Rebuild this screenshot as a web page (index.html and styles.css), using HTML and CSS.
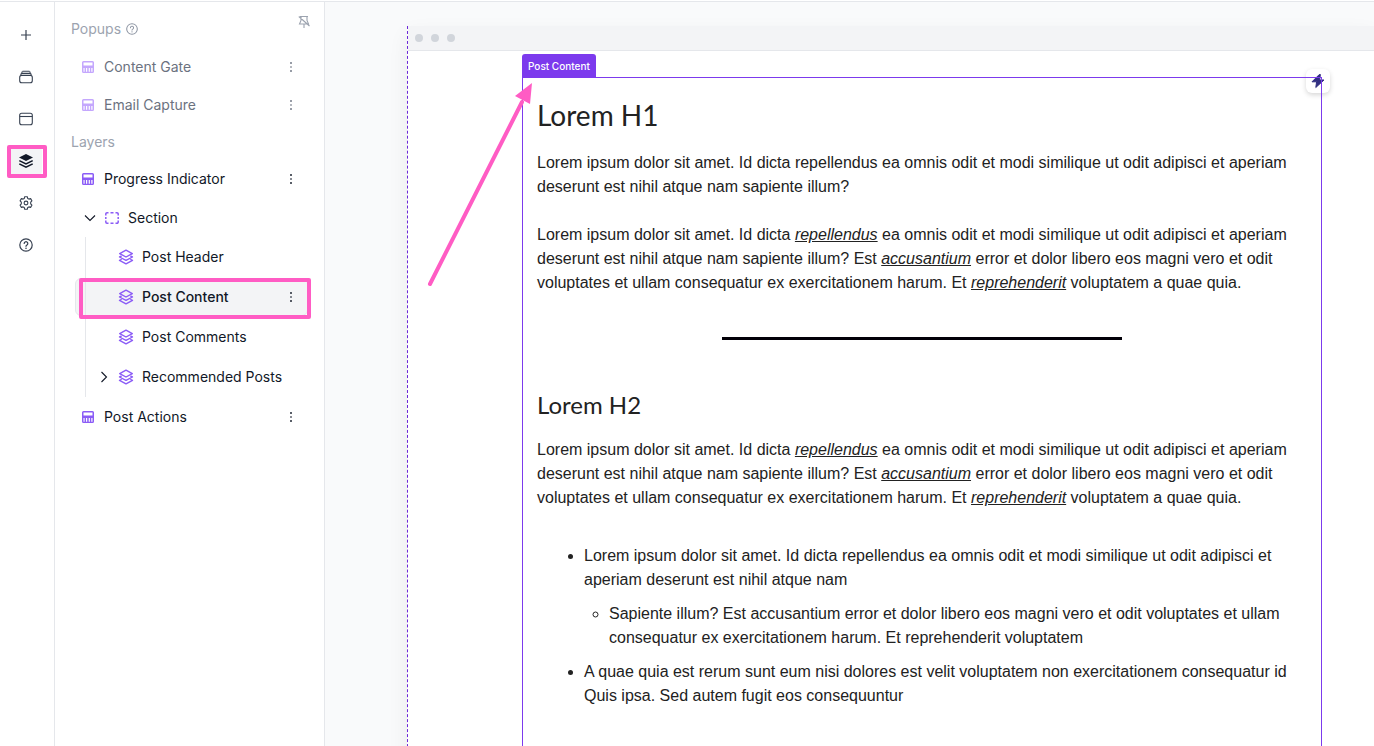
FILE: index.html
```html
<!DOCTYPE html>
<html lang="en">
<head>
  <meta charset="UTF-8" />
  <meta name="viewport" content="width=device-width, initial-scale=1.0" />
  <title>Layers - Post Editor</title>
  <link rel="stylesheet" href="styles.css">
</head>
<body>
  <!-- shared icons -->
  <svg class="sprite" aria-hidden="true">
    <symbol id="i-page" viewBox="0 0 14 14">
      <path fill="currentColor" fill-rule="evenodd" d="M2.500 1h9A1.500 1.500 0 0 1 13 2.500v9a1.500 1.500 0 0 1-1.500 1.500h-9A1.500 1.500 0 0 1 1 11.500v-9A1.500 1.500 0 0 1 2.500 1zM2.500 2.500v3h9v-3zM2.500 8v3.800h1.100V8zM5 8v3.800h1.200V8zM7.700 8v3.800h1.200V8zM10.300 8v3.800h1.200V8z"/>
    </symbol>
    <symbol id="i-layers" viewBox="0 0 16 16">
      <g fill="none" stroke="currentColor" stroke-width="1.400" stroke-linejoin="round" stroke-linecap="round">
        <path d="M8 1.200l6.300 3.400L8 8 1.700 4.600z"/>
        <path d="M3.200 7.200l-1.700.8L8 11.400 14.500 8l-1.700-.8"/>
        <path d="M3.200 10.500l-1.700.9L8 14.800l6.500-3.400-1.700-.9"/>
      </g>
    </symbol>
    <symbol id="i-dots" viewBox="0 0 4 12">
      <path fill="currentColor" d="M1 1h2v2H1zM1 9h2v2H1z" opacity=".7"/>
      <path fill="currentColor" d="M1 5h2v2H1z" opacity=".5"/>
    </symbol>
    <symbol id="i-help" viewBox="0 0 14 14">
      <circle cx="7" cy="7" r="6.200" fill="none" stroke="currentColor" stroke-width="1.200"/>
      <path d="M5.200 5.500a1.800 1.800 0 1 1 2.700 1.600c-.6.300-.9.600-.9 1.200" fill="none" stroke="currentColor" stroke-width="1.200" stroke-linecap="round"/>
      <circle cx="7" cy="10.300" r=".8" fill="currentColor"/>
    </symbol>
  </svg>

  <div class="app">
    <nav class="rail" aria-label="Tools">
      <button class="rail-btn" aria-label="Add">
        <svg width="14" height="14" viewBox="0 0 14 14"><path d="M7 2v10M2 7h10" stroke="currentColor" stroke-width="1.200"/></svg>
      </button>
      <button class="rail-btn" aria-label="Library">
        <svg width="14" height="14" viewBox="0 0 14 14" fill="none" stroke="currentColor" stroke-width="1.100"><path d="M3.500 1.300h7M1.900 5.500V4.600A1.200 1.200 0 0 1 3 3.400h8a1.200 1.200 0 0 1 1.100 1.200v.9M2.700 3.400c0-1.200.4-2.100 1.300-2.100M11.300 3.400c0-1.200-.4-2.100-1.300-2.100"/><rect x=".7" y="5.400" width="12.600" height="7.400" rx="2"/></svg>
      </button>
      <button class="rail-btn" aria-label="Pages">
        <svg width="14" height="14" viewBox="0 0 14 14" fill="none" stroke="currentColor" stroke-width="1.100"><rect x=".7" y="1.300" width="12.600" height="11.400" rx="2"/><path d="M.7 4.500h12.600"/></svg>
      </button>
      <button class="rail-btn active" aria-label="Layers">
        <svg width="16" height="16" viewBox="0 0 16 16"><path fill="currentColor" d="M8 1l7 3.500L8 8 1 4.500z"/><path d="M1.300 7.600L8 10.900l6.700-3.300M1.300 10.900L8 14.200l6.700-3.300" fill="none" stroke="currentColor" stroke-width="1.600"/></svg>
        <span class="marker"></span>
      </button>
      <button class="rail-btn" aria-label="Settings">
        <svg width="14" height="14" viewBox="0 0 14 14" fill="none" stroke="currentColor" stroke-width="1.100" stroke-linejoin="round"><path d="M5.700.7h2.600l.4 1.700 1.200.7 1.700-.5 1.300 2.200-1.200 1.300v1.800l1.200 1.300-1.300 2.200-1.700-.5-1.200.7-.4 1.700H5.700l-.4-1.700-1.200-.7-1.700.5L1.100 9.200l1.200-1.300V6.100L1.100 4.800l1.300-2.200 1.700.5 1.200-.7z"/><circle cx="7" cy="7" r="1.900"/></svg>
      </button>
      <button class="rail-btn" aria-label="Help">
        <svg width="14" height="14"><use href="#i-help"/></svg>
      </button>
    </nav>

    <aside class="panel">
      <div class="panel-title top">
        <span>Popups</span>
        <svg class="info" width="12" height="12"><use href="#i-help"/></svg>
        <button class="pin" aria-label="Unpin panel">
          <svg width="12" height="14" viewBox="0 0 12 14" fill="none" stroke="currentColor" stroke-width="1.100"><path d="M2 1.500h8M3 1.500v4L1.500 9h9L9 5.500v-4M6 9v4M.8 1.500l10.700 9.500"/></svg>
        </button>
      </div>
      <ul class="layers">
        <li class="row popup"><svg class="page" width="14" height="14"><use href="#i-page"/></svg><span>Content Gate</span><button class="more" aria-label="Content Gate options"><svg width="4" height="12"><use href="#i-dots"/></svg></button></li>
        <li class="row popup"><svg class="page" width="14" height="14"><use href="#i-page"/></svg><span>Email Capture</span><button class="more" aria-label="Email Capture options"><svg width="4" height="12"><use href="#i-dots"/></svg></button></li>
      </ul>

      <div class="panel-title">Layers</div>
      <ul class="layers">
        <li class="row"><svg class="page" width="14" height="14"><use href="#i-page"/></svg><span>Progress Indicator</span><button class="more" aria-label="Progress Indicator options"><svg width="4" height="12"><use href="#i-dots"/></svg></button></li>
        <li>
          <div class="row section">
            <button class="toggle" aria-label="Collapse Section"><svg width="12" height="8" viewBox="0 0 12 8"><path d="M1 1.500l5 5 5-5" fill="none" stroke="currentColor" stroke-width="1.100"/></svg></button>
            <svg width="14" height="12" viewBox="0 0 14 12" fill="none" stroke="currentColor" stroke-width="1.500"><path d="M.8 3.500V2A1.200 1.200 0 0 1 2 .8h1.500M5.500.8h3M10.500.8H12A1.200 1.200 0 0 1 13.200 2v1.500M13.200 5v2M13.200 8.500V10a1.200 1.200 0 0 1-1.200 1.200h-1.500M8.500 11.200h-3M3.500 11.200H2A1.200 1.200 0 0 1 .8 10V8.500M.8 7V5"/></svg>
            <span>Section</span>
          </div>
          <ul class="children">
            <li class="row"><svg width="16" height="16"><use href="#i-layers"/></svg><span>Post Header</span></li>
            <li class="row selected"><svg width="16" height="16"><use href="#i-layers"/></svg><span>Post Content</span><button class="more" aria-label="Post Content options"><svg width="4" height="12"><use href="#i-dots"/></svg></button><span class="marker"></span></li>
            <li class="row"><svg width="16" height="16"><use href="#i-layers"/></svg><span>Post Comments</span></li>
            <li class="row nested">
              <button class="toggle" aria-label="Expand Recommended Posts"><svg width="8" height="12" viewBox="0 0 8 12"><path d="M1.500 1l5 5-5 5" fill="none" stroke="currentColor" stroke-width="1.100"/></svg></button>
              <svg width="16" height="16"><use href="#i-layers"/></svg><span>Recommended Posts</span>
            </li>
          </ul>
        </li>
        <li class="row"><svg class="page" width="14" height="14"><use href="#i-page"/></svg><span>Post Actions</span><button class="more" aria-label="Post Actions options"><svg width="4" height="12"><use href="#i-dots"/></svg></button></li>
      </ul>
    </aside>

    <main class="canvas">
      <div class="frame">
        <div class="frame-bar"><i></i><i></i><i></i></div>
        <article class="post">
          <span class="tag">Post Content</span>
          <button class="bolt" aria-label="Quick actions">
            <svg width="14" height="16" viewBox="0 0 14 16"><path fill="#312e81" stroke="#312e81" stroke-linejoin="round" d="M8.300 1.500L1 8.800h4.600L4.800 14.500 13 7H8.600l.8-5.500z"/></svg>
          </button>
          <svg class="arrow" width="112" height="212" viewBox="0 0 112 212"><path d="M6 206L98 24" stroke="#ff5cc4" stroke-width="4" stroke-linecap="round"/><path fill="#ff5cc4" d="M108 5l-2 21-15-8z"/></svg>

          <h1>Lorem H1</h1>
          <p>Lorem ipsum dolor sit amet. Id dicta repellendus ea omnis odit et modi similique ut odit adipisci et aperiam deserunt est nihil atque nam sapiente illum?</p>
          <p>Lorem ipsum dolor sit amet. Id dicta <a href="#">repellendus</a> ea omnis odit et modi similique ut odit adipisci et aperiam deserunt est nihil atque nam sapiente illum? Est <a href="#">accusantium</a> error et dolor libero eos magni vero et odit voluptates et ullam consequatur ex exercitationem harum. Et <a href="#">reprehenderit</a> voluptatem a quae quia.</p>
          <hr>
          <h2>Lorem H2</h2>
          <p>Lorem ipsum dolor sit amet. Id dicta <a href="#">repellendus</a> ea omnis odit et modi similique ut odit adipisci et aperiam deserunt est nihil atque nam sapiente illum? Est <a href="#">accusantium</a> error et dolor libero eos magni vero et odit voluptates et ullam consequatur ex exercitationem harum. Et <a href="#">reprehenderit</a> voluptatem a quae quia.</p>
          <ul class="list">
            <li>Lorem ipsum dolor sit amet. Id dicta repellendus ea omnis odit et modi similique ut odit adipisci et aperiam deserunt est nihil atque nam
              <ul>
                <li>Sapiente illum? Est accusantium error et dolor libero eos magni vero et odit voluptates et ullam consequatur ex exercitationem harum. Et reprehenderit voluptatem</li>
              </ul>
            </li>
            <li>A quae quia est rerum sunt eum nisi dolores est velit voluptatem non exercitationem consequatur id Quis ipsa. Sed autem fugit eos consequuntur</li>
          </ul>
        </article>
      </div>
    </main>
  </div>
</body>
</html>
```

FILE: styles.css
```css
* {
  box-sizing: border-box;
}

body {
  margin: 0;
  padding-top: 1px;
  background: #fff;
  color: #111827;
  font: 14px/18px Inter, sans-serif;
  overflow: hidden;
}

ul {
  list-style: none;
  margin: 0;
  padding: 0;
}

button {
  padding: 0;
  border: none;
  background: none;
  color: inherit;
  font: inherit;
  cursor: pointer;
}

svg {
  display: block;
  flex-shrink: 0;
}

.sprite {
  position: absolute;
  width: 0;
  height: 0;
}

.app {
  display: flex;
  height: calc(100vh - 1px);
  border-top: 1px solid #e5e7eb;
}

/* icon rail */
.rail {
  flex: none;
  display: flex;
  flex-direction: column;
  gap: 10px;
  padding: 17px 12px 0 10px;
  border-right: 1px solid #e5e7eb;
}

.rail-btn {
  position: relative;
  display: flex;
  align-items: center;
  justify-content: center;
  width: 32px;
  height: 32px;
  border-radius: 6px;
  color: #374151;
}

.rail-btn.active {
  background: #f3f4f6;
  color: #111827;
}

.marker {
  position: absolute;
  border: 4px solid #ff5cc4;
  border-radius: 2px;
  pointer-events: none;
}

.rail-btn .marker {
  inset: 0 -5px -1px -3px;
}

/* layers panel */
.panel {
  position: relative;
  z-index: 0;
  flex: none;
  width: 270px;
  padding: 8px 16px;
  border-right: 1px solid #e5e7eb;
}

.panel-title {
  display: flex;
  align-items: center;
  gap: 5px;
  height: 35px;
  color: #9ca3af;
}

.panel-title.top {
  height: 38px;
}

.info {
  color: #8b93a1;
}

.pin {
  align-self: flex-start;
  margin: 5px -2px 0 auto;
}

.row {
  position: relative;
  display: flex;
  align-items: center;
  height: 40px;
  padding-left: 10px;
  white-space: nowrap;
}

.row > svg {
  color: #8b5cf6;
}

.row .page {
  margin-right: 9px;
}

.row.popup {
  height: 38px;
  color: #6b7280;
}

.row.popup > svg {
  color: #c4a7fd;
}

.row.section {
  height: 38px;
  gap: 9px;
  padding-left: 13px;
}

.more {
  display: flex;
  justify-content: center;
  width: 12px;
  margin-left: auto;
  margin-right: 11px;
}

.children {
  margin-left: 14px;
  border-left: 1px solid #e5e7eb;
}

.children .row {
  gap: 8px;
  padding-left: 32px;
}

.children .row.nested {
  gap: 10px;
  padding-left: 14px;
}

.nested span {
  margin-left: -2px;
}

.row.selected {
  font-weight: 500;
}

.row.selected::before {
  content: "";
  position: absolute;
  inset: 1px 0 1px -11px;
  z-index: -1;
  background: #f3f4f6;
  border: 1px solid #e5e7eb;
  border-radius: 6px;
}

.selected .marker {
  inset: 1px -3px -2px -7px;
}

/* preview */
.canvas {
  flex: 1;
  min-width: 0;
  padding: 24px 0 0 82px;
  background: #f9fafb;
}

.frame {
  position: relative;
  z-index: 0;
  min-height: 100%;
  background: #fff;
  border-left: 1px dashed #6d28d9;
  box-shadow: 0 8px 20px rgba(17, 24, 39, 0.06);
}

.frame-bar {
  display: flex;
  align-items: center;
  gap: 8px;
  height: 25px;
  padding-left: 7px;
  background: #f3f4f6;
  border-bottom: 1px solid #e5e7eb;
}

.frame-bar i {
  width: 8px;
  height: 8px;
  border-radius: 50%;
  background: #d1d5db;
}

.post {
  position: relative;
  max-width: 800px;
  min-height: 700px;
  margin: 26px 52px 0 114px;
  padding: 16px 14px;
  border: 1px solid #7c3aed;
  color: #222;
  font: 16px/24px Helvetica, "Liberation Sans", Arial, sans-serif;
}

.tag {
  position: absolute;
  left: -1px;
  bottom: 100%;
  padding: 0 6px;
  border-radius: 3px 3px 0 0;
  background: #7c3aed;
  color: #fff;
  font: 500 10px/24px Inter, sans-serif;
}

.bolt {
  position: absolute;
  top: -9px;
  right: -9px;
  z-index: -1;
  display: flex;
  align-items: center;
  justify-content: center;
  width: 24px;
  height: 24px;
  border-radius: 6px;
  background: #fff;
  box-shadow: 0 2px 5px rgba(0, 0, 0, 0.16);
}

.arrow {
  position: absolute;
  top: 0;
  left: -99px;
}

.post h1, .post h2 {
  font-family: "Trebuchet MS", Lato, sans-serif;
  font-weight: 400;
}

.post h1 {
  margin: 0 0 15px;
  font-size: 28px;
  line-height: 42px;
}

.post h2 {
  margin: 49px 0 17px;
  font-size: 24px;
  line-height: 32px;
}

.post p {
  margin: 0 0 24px;
}

.post a {
  color: inherit;
  font-style: italic;
}

.post hr {
  width: 400px;
  max-width: 100%;
  height: 3px;
  margin: 42px auto 0;
  border: none;
  background: #020008;
}

.list {
  margin-top: 34px;
  padding-left: 47px;
  list-style: disc;
}

.list ul {
  margin-top: 10px;
  padding-left: 25px;
  list-style: circle;
}

.list > li {
  margin-bottom: 10px;
}
```
